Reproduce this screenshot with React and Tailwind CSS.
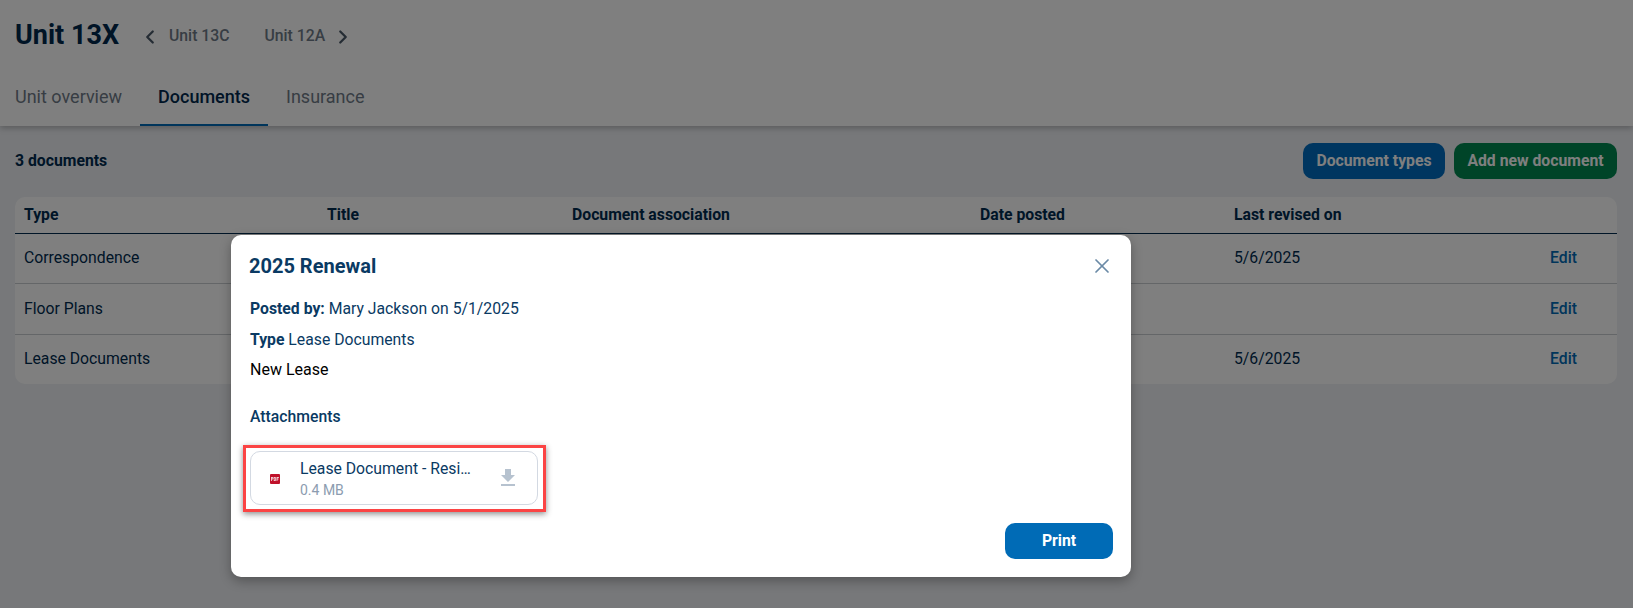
import React from 'react';
import { ChevronLeft, ChevronRight, X } from 'lucide-react';

const rows = [
    { type: 'Correspondence', revised: '5/6/2025', rowClass: 'h-[50px] pb-[2px] border-b border-[#c9ccd1]' },
    { type: 'Floor Plans', revised: '', rowClass: 'h-[51px] border-b border-[#c9ccd1]' },
    { type: 'Lease Documents', revised: '5/6/2025', rowClass: 'h-[49px] pb-[2px]' },
];

const gridCols = 'grid grid-cols-[303px_245px_408px_254px_316px_1fr] pl-[9px]';

function PdfIcon() {
    return (
        <div className="mt-[2px] w-[10px] h-[10px] bg-[#c0112b] rounded-[1px] flex items-center justify-center">
            <svg width="8" height="4" viewBox="0 0 8 4">
                <path d="M0.5 0v4M0.5 .5h1.5v1.5h-1.5M3.2 0v4M3.2 .5h1.4v3h-1.4M6 0v4M6 .5h2M6 2h1.5" stroke="#fff" strokeWidth="0.7" fill="none" />
            </svg>
        </div>
    );
}

function DownloadIcon() {
    return (
        <svg width="24" height="24" viewBox="0 0 24 24" fill="#b6c2cf">
            <path d="M19 9h-4V3H9v6H5l7 7 7-7zM5 18v2h14v-2H5z" />
        </svg>
    );
}

export default function App() {
    return (
        <div className="relative h-screen overflow-hidden bg-[#eef0f4] font-['Roboto',sans-serif] text-[#002b4f]">
            {/* Page under the overlay */}
            <div className="bg-white h-[126px] shadow-[0_2px_6px_rgba(0,0,0,0.25)] px-[15px]">
                <div className="flex items-center h-[70px]">
                    <h1 className="text-[27px] font-bold leading-none text-[#00284d]">Unit 13X</h1>
                    <ChevronLeft className="ml-[20px] mt-[3px] text-[#4a5968]" size={22} strokeWidth={2.5} />
                    <span className="ml-[8px] mt-[1px] text-[15.75px] font-medium text-[#6f7b88]">Unit 13C</span>
                    <span className="ml-[35px] mt-[1px] text-[15.75px] font-medium text-[#6f7b88]">Unit 12A</span>
                    <ChevronRight className="ml-[7px] mt-[3px] text-[#4a5968]" size={22} strokeWidth={2.5} />
                </div>
                <div className="flex h-[56px] text-[18px] -ml-[18px]">
                    <div className="px-[18px] pt-[13px] text-[#6f7b88]">Unit overview</div>
                    <div className="px-[18px] pt-[13px] font-medium text-[#00284d] border-b-2 border-[#006bb6]">Documents</div>
                    <div className="px-[18px] pt-[13px] text-[#6f7b88]">Insurance</div>
                </div>
            </div>
            <div className="px-[15px] pr-[16px]">
                <div className="flex items-center justify-between h-[69px] mb-[2px]">
                    <div className="text-[15.75px] font-bold">3 documents</div>
                    <div className="flex gap-[9px]">
                        <button className="h-[36px] w-[142px] rounded-[10px] bg-[#006cc0] text-white text-[15.75px] font-bold">Document types</button>
                        <button className="h-[36px] w-[163px] rounded-[10px] bg-[#008850] text-white text-[15.75px] font-bold">Add new document</button>
                    </div>
                </div>
                <div className="bg-white rounded-[10px] h-[187px] text-[15.75px]">
                    <div className={`${gridCols} h-[37px] items-center font-bold border-b border-[#002b4f]`}>
                        <div>Type</div>
                        <div>Title</div>
                        <div>Document association</div>
                        <div>Date posted</div>
                        <div>Last revised on</div>
                        <div></div>
                    </div>
                    {rows.map(row => (
                        <div key={row.type} className={`${gridCols} items-center ${row.rowClass}`}>
                            <div>{row.type}</div>
                            <div></div>
                            <div></div>
                            <div></div>
                            <div>{row.revised}</div>
                            <div className="text-[#006bb6] font-medium">Edit</div>
                        </div>
                    ))}
                </div>
            </div>

            {/* Dim overlay + modal */}
            <div className="absolute inset-0 bg-black/50 pl-[231px] pt-[235px]">
                <div className="relative w-[900px] h-[342px] bg-white rounded-[10px] shadow-[0_4px_12px_rgba(0,0,0,0.3)] pl-[19px] pt-[20px]">
                    <h2 className="-ml-[1px] text-[20px] leading-[22px] font-bold text-[#0a3a63]">2025 Renewal</h2>
                    <X className="absolute right-[17px] top-[19px] text-[#6b8aa6]" size={24} strokeWidth={1.75} />
                    <div className="text-[15.75px] text-[#0a3a63]">
                        <p className="mt-[22px] leading-[20px]"><span className="font-bold">Posted by:</span> Mary Jackson on 5/1/2025</p>
                        <p className="mt-[11px] leading-[20px]"><span className="font-bold">Type</span> Lease Documents</p>
                        <p className="mt-[10px] leading-[20px] text-[16px] text-black">New Lease</p>
                        <p className="mt-[27px] leading-[20px] font-medium">Attachments</p>
                    </div>
                    {/* Attachment card with annotation frame */}
                    <div className="mt-[18px] -ml-[7px] w-[303px] h-[67px] border-[3px] border-[#fb4444] shadow-[0_2px_6px_rgba(0,0,0,0.45)] pl-[4px] pt-[3px]">
                        <div className="flex items-center w-[288px] h-[54px] rounded-[10px] border border-[#d3d9e2] pl-[19px] pr-[17px]">
                            <PdfIcon />
                            <div className="ml-[20px] pt-[2px]">
                                <div className="text-[15.75px] leading-[20px] text-[#0a3a63] whitespace-nowrap">Lease Document - Resi…</div>
                                <div className="text-[14px] leading-[18px] mt-[2px] text-[#8c9cb0]">0.4 MB</div>
                            </div>
                            <div className="ml-auto"><DownloadIcon /></div>
                        </div>
                    </div>
                    <button className="absolute right-[18px] bottom-[18px] w-[108px] h-[36px] rounded-[10px] bg-[#006bb6] text-white text-[15.75px] font-bold">Print</button>
                </div>
            </div>
        </div>
    );
}
